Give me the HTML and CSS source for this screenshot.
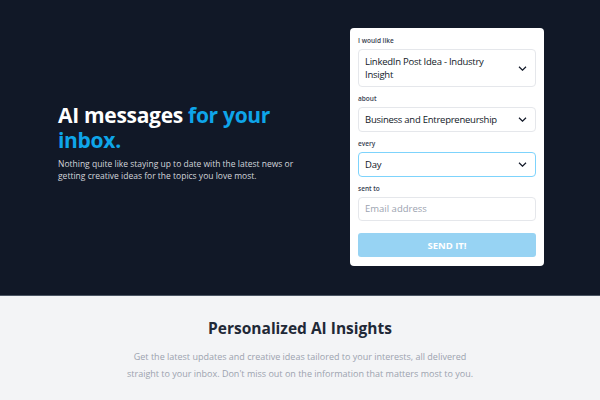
FILE: index.html
```html
<!DOCTYPE html>
<html lang="en">
<head>
    <meta charset="UTF-8">
    <meta name="viewport" content="width=device-width, initial-scale=1.0">
    <title>AI messages for your inbox</title>
    <link rel="stylesheet" href="styles.css">
</head>
<body>
    <section class="hero">
        <div class="hero-text">
            <h1>AI messages <span class="accent">for your inbox.</span></h1>
            <p>Nothing quite like staying up to date with the latest news or getting creative ideas for the topics you love most.</p>
        </div>

        <form class="signup-card">
            <label class="field-label">I would like</label>
            <div class="select-box">
                <span>LinkedIn Post Idea - Industry Insight</span>
                <svg class="chevron" width="9" height="5" viewBox="0 0 9 5"><path d="M1 0.8l3.5 3.4 3.5-3.4" fill="none" stroke="#111827" stroke-width="1.2"/></svg>
            </div>

            <label class="field-label">about</label>
            <div class="select-box">
                <span>Business and Entrepreneurship</span>
                <svg class="chevron" width="9" height="5" viewBox="0 0 9 5"><path d="M1 0.8l3.5 3.4 3.5-3.4" fill="none" stroke="#111827" stroke-width="1.2"/></svg>
            </div>

            <label class="field-label">every</label>
            <div class="select-box focused">
                <span>Day</span>
                <svg class="chevron" width="9" height="5" viewBox="0 0 9 5"><path d="M1 0.8l3.5 3.4 3.5-3.4" fill="none" stroke="#111827" stroke-width="1.2"/></svg>
            </div>

            <label class="field-label">sent to</label>
            <input type="email" class="text-input" placeholder="Email address">

            <button type="button" class="btn-send">SEND IT!</button>
        </form>
    </section>

    <section class="insights">
        <h2>Personalized AI Insights</h2>
        <p>Get the latest updates and creative ideas tailored to your interests, all delivered straight to your inbox. Don't miss out on the information that matters most to you.</p>
    </section>
</body>
</html>
```

FILE: styles.css
```css
body {
    font-family: 'Open Sans', 'Noto Sans', sans-serif;
    margin: 0;
    padding: 0;
    background-color: #f3f4f6;
}
.hero {
    background-color: #111827;
    border-bottom: 1px solid #4b5563;
    display: flex;
    align-items: center;
    justify-content: space-between;
    padding: 28px 56px 29px 58px;
}
.hero-text {
    width: 245px;
    margin-top: -9px;
}
.hero-text h1 {
    color: #ffffff;
    font-size: 21px;
    line-height: 25px;
    font-weight: 700;
    margin: 0 0 5px;
    letter-spacing: -0.3px;
}
.hero-text .accent {
    color: #0ea5e9;
}
.hero-text p {
    color: #d1d5db;
    font-size: 8.5px;
    line-height: 12px;
    margin: 0;
}
.signup-card {
    background-color: #ffffff;
    border-radius: 4px;
    width: 194px;
    box-sizing: border-box;
    padding: 8px 8px 9px;
    display: flex;
    flex-direction: column;
}
.field-label {
    font-size: 6.5px;
    font-weight: 600;
    color: #374151;
    line-height: 10px;
    margin-bottom: 3px;
}
.select-box {
    display: flex;
    align-items: center;
    justify-content: space-between;
    border: 1px solid #e5e7eb;
    border-radius: 4px;
    padding: 5px 8px 5px 6px;
    min-height: 13px;
    font-size: 9.5px;
    line-height: 13px;
    font-weight: 500;
    letter-spacing: -0.25px;
    color: #111827;
    margin-bottom: 7px;
}
.select-box span {
    max-width: 140px;
}
.select-box.focused {
    border-color: #7dd3fc;
}
.chevron {
    flex-shrink: 0;
}
.text-input {
    border: 1px solid #e5e7eb;
    border-radius: 4px;
    padding: 5px 6px;
    font-family: inherit;
    font-size: 9.5px;
    line-height: 12px;
    color: #111827;
    margin-bottom: 12px;
}
.text-input::placeholder {
    color: #9ca3af;
}
.btn-send {
    background-color: #97d3f3;
    color: #ffffff;
    border: none;
    border-radius: 3px;
    height: 24px;
    font-family: inherit;
    font-size: 9.5px;
    font-weight: 700;
    cursor: pointer;
}
.insights {
    text-align: center;
    padding: 21px 0 20px;
}
.insights h2 {
    color: #1f2937;
    font-size: 15.5px;
    font-weight: 700;
    line-height: 22px;
    margin: 0 0 9px;
}
.insights p {
    color: #9ca3af;
    font-size: 9px;
    line-height: 17px;
    max-width: 352px;
    margin: 0 auto;
}
```
